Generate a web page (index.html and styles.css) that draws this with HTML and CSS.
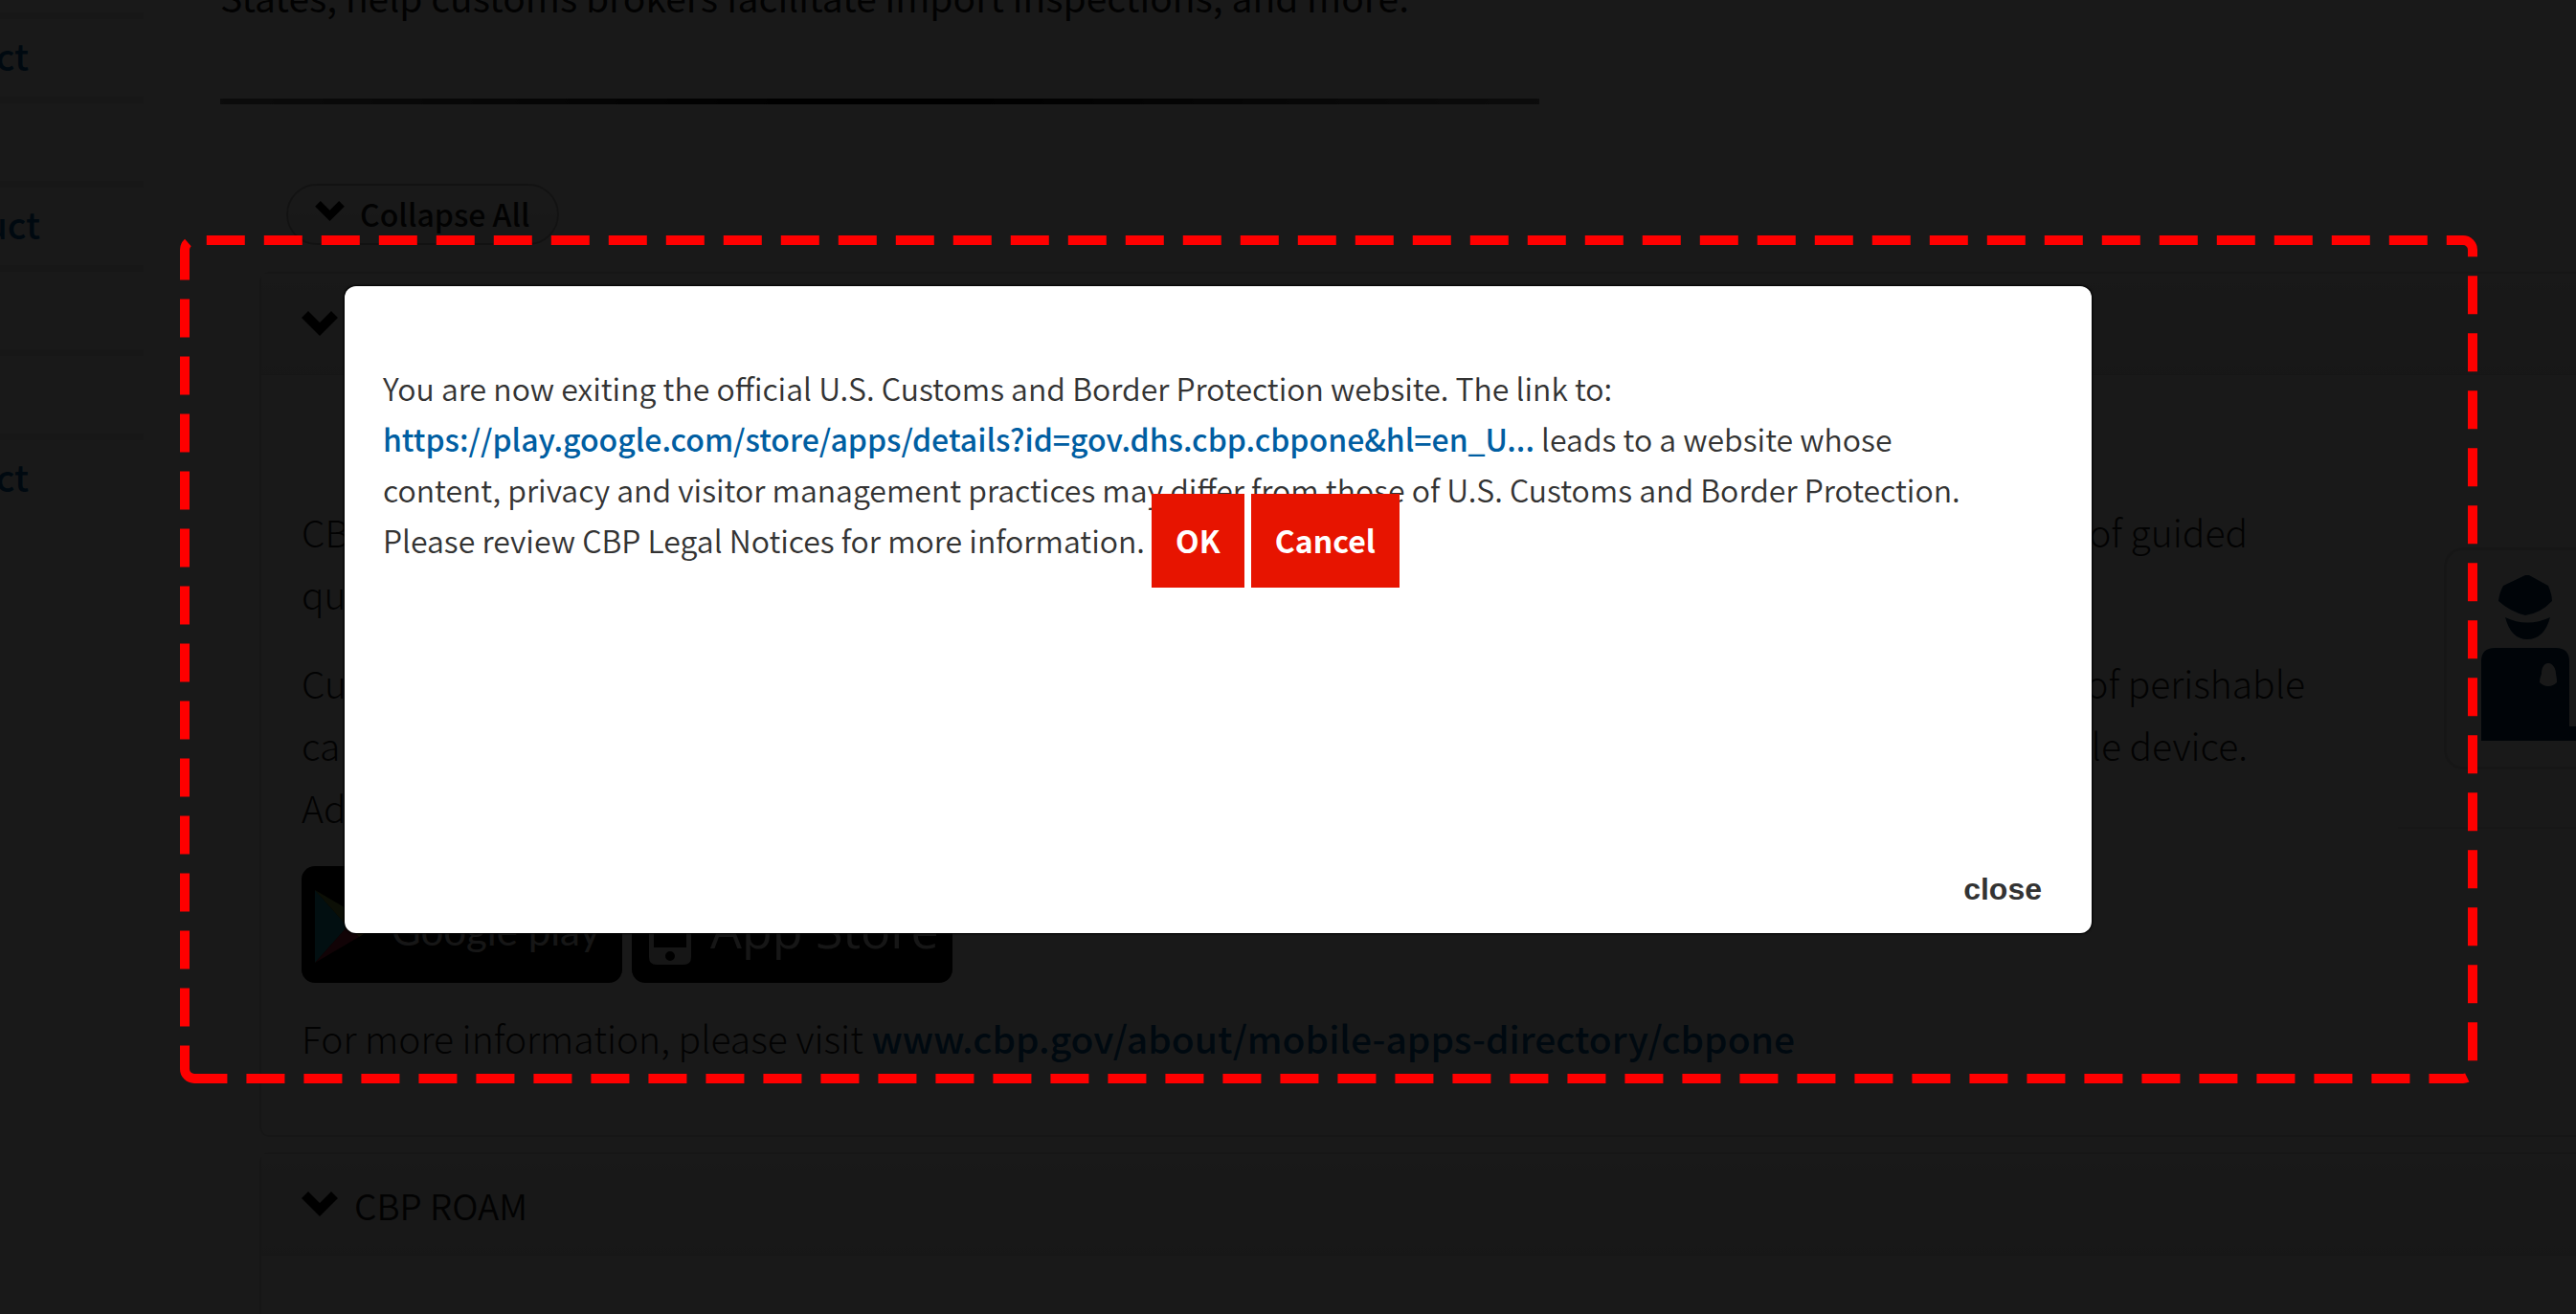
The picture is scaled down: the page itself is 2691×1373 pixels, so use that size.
FILE: index.html
```html
<!DOCTYPE html>
<html lang="en">
<head>
<meta charset="utf-8">
<title>Mobile Apps Directory</title>
<link rel="stylesheet" href="styles.css">
</head>
<body>
<div class="page">
  <nav class="sidebar">
    <div class="side-row"><a href="#" class="side-link">ct</a></div>
    <div class="side-row"></div>
    <div class="side-row"><a href="#" class="side-link side-link-wide">uct</a></div>
    <div class="side-row"></div>
    <div class="side-row"></div>
    <div class="side-row"><a href="#" class="side-link">ct</a></div>
  </nav>
  <main class="main">
    <p class="intro">States, help customs brokers facilitate import inspections, and more.</p>
    <hr class="rule">
    <button type="button" class="collapse">
      <svg class="chev-small" viewBox="0 0 38 26" aria-hidden="true"><path d="M0 7 7 0 19 12 31 0 38 7 19 26Z"/></svg>
      Collapse All
    </button>
    <section class="card">
      <div class="card-head">
        <svg class="chev" viewBox="0 0 38 26" aria-hidden="true"><path d="M0 7 7 0 19 12 31 0 38 7 19 26Z"/></svg>
      </div>
      <div class="card-body">
        <div class="copy">
          <div class="para">
            <div class="line line-short"><span>CB</span><span>of guided</span></div>
            <div class="line"><span>qu</span></div>
          </div>
          <div class="para">
            <div class="line"><span>Cu</span><span>of perishable</span></div>
            <div class="line line-short"><span>ca</span><span>le device.</span></div>
            <div class="line"><span>Ad</span></div>
          </div>
          <div class="stores">
            <a href="#" class="store store-google">
              <svg class="play" viewBox="0 0 64 76" aria-hidden="true">
                <path fill="#1c9aa8" d="M0 0 34 38 0 76Z"/>
                <path fill="#7f9a3c" d="M0 0 46 27 34 38Z"/>
                <path fill="#d8a030" d="M46 27 64 38 46 49 34 38Z"/>
                <path fill="#a8203c" d="M0 76 34 38 46 49Z"/>
              </svg>
              <span>Google play</span>
            </a>
            <a href="#" class="store store-apple">
              <svg class="phone" viewBox="0 0 44 76" aria-hidden="true">
                <path fill="#ddd" fill-rule="evenodd" d="M8 0H36Q44 0 44 8V68Q44 76 36 76H8Q0 76 0 68V8Q0 0 8 0ZM5 10V58H39V10ZM22 62A5 5 0 1 0 22 72A5 5 0 1 0 22 62Z"/>
              </svg>
              <span>App Store</span>
            </a>
          </div>
          <p class="more">For more information, please visit <a href="#" class="more-link">www.cbp.gov/about/mobile-apps-directory/cbpone</a></p>
        </div>
        <aside class="aside">
          <div class="figure">
            <svg class="officer" viewBox="0 0 99 173" aria-hidden="true">
              <path d="M46 0Q48 -1 50 0L70 11Q74 20 74 27Q62 40 46 42Q30 38 18 27Q19 18 23 11Z"/>
              <path d="M25 44Q48 55 72 44Q66 67 48 67Q31 67 25 44Z"/>
              <path fill-rule="evenodd" d="M14 76H78Q92 76 92 90V158H99V173H0V90Q0 76 14 76ZM70 92C65 92 63 98 63 103Q61 108 61 112Q65 116 70 116Q75 116 79 112Q79 108 78 103C78 98 75 92 70 92Z"/>
            </svg>
          </div>
        </aside>
      </div>
    </section>
    <section class="card">
      <div class="card-head">
        <svg class="chev" viewBox="0 0 38 26" aria-hidden="true"><path d="M0 7 7 0 19 12 31 0 38 7 19 26Z"/></svg>
        <h2 class="card-title">CBP ROAM</h2>
      </div>
      <div class="card-body card-body-next"></div>
    </section>
  </main>
</div>
<div class="overlay"></div>
<div class="dialog" role="dialog" aria-label="Leaving site">
  <div class="message">
    You are now exiting the official U.S. Customs and Border Protection website. The link to:<br>
    <a href="#" class="target">https://play.google.com/store/apps/details?id=gov.dhs.cbp.cbpone&amp;hl=en_U...</a> leads to a website whose<br>
    content, privacy and visitor management practices may differ from those of U.S. Customs and Border Protection.<br>
    Please review CBP Legal Notices for more information.
    <button type="button" class="btn">OK</button>
    <button type="button" class="btn">Cancel</button>
  </div>
  <button type="button" class="close">close</button>
</div>
<svg class="marker" viewBox="0 0 2400 886" aria-hidden="true">
  <path d="M15 881A10 10 0 0 1 5 871V15A10 10 0 0 1 15 5H2385A10 10 0 0 1 2395 15V871A10 10 0 0 1 2385 881Z"/>
</svg>
</body>
</html>
```
FILE: styles.css
```css
* { box-sizing: border-box; }
body {
  margin: 0;
  height: 100vh;
  overflow: hidden;
  position: relative;
  background: #fff;
  color: #1b1b1b;
  font-family: "Noto Sans CJK SC", sans-serif;
}
button { font-family: inherit; cursor: pointer; }
a { text-decoration: none; }
p { margin: 0; }

.page { display: flex; gap: 80px; height: 100%; overflow: hidden; }

.sidebar { width: 150px; flex: none; padding-top: 13px; }
.side-row {
  height: 88px;
  padding-bottom: 6px;
  border-top: 7px solid #e8e8e8;
  display: flex;
  align-items: center;
}
.side-link {
  display: flex;
  justify-content: flex-end;
  width: 30px;
  font-size: 38px;
  line-height: 60px;
  font-weight: 500;
  color: #005ea2;
}
.side-link-wide { width: 42px; }

.main { flex: 1; min-width: 0; margin-top: -36px; }
.intro { font-size: 39px; line-height: 65px; white-space: nowrap; }
.rule {
  width: 1378px;
  height: 6px;
  margin: 74px 0 83px;
  border: 0;
  background: linear-gradient(90deg, #777, #000 45%, #000 55%, #777);
}
.collapse {
  display: flex;
  align-items: center;
  gap: 16px;
  height: 64px;
  margin: 0 0 28px 69px;
  padding: 0 28px 2px;
  border: 2px solid #bbb;
  border-radius: 32px;
  background: linear-gradient(#fff, #eee);
  color: #1b1b1b;
  font-size: 32px;
  line-height: 60px;
  font-weight: 500;
}
.chev-small { width: 31px; height: 21px; margin-bottom: 6px; }
.chev { width: 38px; height: 26px; margin-bottom: 2px; }

.card {
  margin: 0 0 16px 41px;
  border: 2px solid #ddd;
  border-right: 0;
  border-radius: 10px 0 0 10px;
}
.card-head {
  display: flex;
  align-items: center;
  gap: 17px;
  height: 106px;
  padding-left: 42px;
  background: linear-gradient(#f8f8f8, #ececec);
  border-bottom: 1px solid #ddd;
}
.card-title { margin: 0; font-size: 37px; line-height: 60px; font-weight: 350; }
.card-body { display: flex; align-items: flex-start; }
.card-body-next { min-height: 240px; }
.copy { flex: 1; padding: 131px 97px 69px 42px; font-size: 39px; line-height: 65px; font-weight: 300; }
.para { margin-bottom: 28px; }
.line { display: flex; justify-content: space-between; }
.line-short { padding-right: 60px; }

.stores { display: flex; gap: 10px; padding-top: 1px; }
.store {
  display: flex;
  align-items: center;
  width: 335px;
  height: 122px;
  border-radius: 14px;
  background: #000;
  color: #ddd;
  white-space: nowrap;
}
.store-google { padding: 12px 0 0 14px; gap: 16px; font: 400 42px Lato, sans-serif; }
.store-apple { padding: 8px 0 0 18px; gap: 20px; font: 500 52px "Open Sans", sans-serif; }
.play { width: 64px; height: 76px; margin-bottom: 8px; }
.phone { width: 44px; height: 76px; }
.more { margin-top: 25px; }
.more-link { color: #005ea2; font-weight: 500; }

.aside { width: 186px; flex: none; padding: 180px 0 60px 48px; border-bottom: 2px solid #e4e4e4; }
.figure {
  height: 232px;
  padding: 26px 0 0 36px;
  border: 3px solid #ddd;
  border-right: 0;
  border-radius: 20px 0 0 20px;
}
.officer { display: block; width: 99px; height: 173px; fill: #003058; }

.overlay { position: absolute; inset: 0; background: rgba(0, 0, 0, 0.9); }

.dialog {
  position: absolute;
  top: 299px;
  left: 360px;
  right: 506px;
  display: flex;
  flex-direction: column;
  justify-content: space-between;
  min-height: 676px;
  padding: 80px 52px 26px 40px;
  border-radius: 12px;
  background: #fff;
  box-shadow: 0 0 2px 1px #000;
  color: #333;
}
.message { font-size: 32px; line-height: 53px; font-weight: 350; }
.target { color: #005ea2; font-weight: 500; }
.btn {
  height: 98px;
  margin: -24px 0;
  padding: 0 25px;
  border: 0;
  background: #e71400;
  color: #fff;
  font-size: 32px;
  line-height: 53px;
  font-weight: 700;
}
.close {
  align-self: flex-end;
  padding: 0;
  border: 0;
  background: none;
  color: #333;
  font: 700 32px/40px "Liberation Sans", sans-serif;
}

.marker {
  position: absolute;
  top: 246px;
  left: 188px;
  width: calc(100% - 291px);
  height: 886px;
  fill: none;
  stroke: #f00;
  stroke-width: 10;
  stroke-dasharray: 40 20;
  pointer-events: none;
}
```
